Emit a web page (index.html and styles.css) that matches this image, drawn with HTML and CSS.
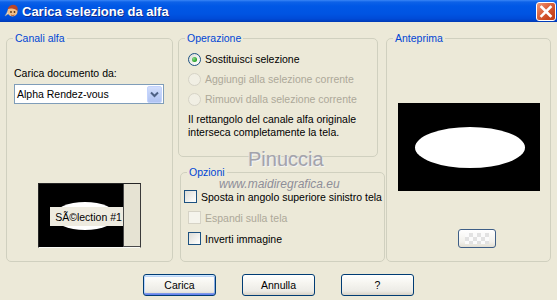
FILE: index.html
```html
<!DOCTYPE html>
<html>
<head>
<meta charset="utf-8">
<link rel="stylesheet" href="styles.css">
</head>
<body>
<div class="window">
  <div class="titlebar">
    <svg class="appicon" viewBox="0 0 16 16" width="16" height="16">
      <path d="M2 13 L6 6 L8 9 Z" fill="#e8e8e8" stroke="#9a9a9a" stroke-width="0.6"/>
      <circle cx="9.5" cy="8.5" r="5" fill="#f2c08a"/>
      <path d="M4.5 6 Q7 1 12 2 Q15.5 3.5 14.5 8 Q12 5 8 5.5 Z" fill="#b8452a"/>
      <circle cx="8" cy="9" r="0.9" fill="#5a3010"/>
      <circle cx="11.5" cy="9" r="0.9" fill="#5a3010"/>
      <path d="M8 12 Q9.8 13.2 11.5 12" stroke="#a04020" stroke-width="0.8" fill="none"/>
    </svg>
    <span class="title">Carica selezione da alfa</span>
    <div class="close">
      <svg class="close-x" viewBox="0 0 18 17" width="18" height="17"><path d="M4.5 4 L13.5 13 M13.5 4 L4.5 13" stroke="#ffffff" stroke-width="2.6" stroke-linecap="square"/></svg>
    </div>
  </div>

  <div class="content">
    <div class="groups">
      <fieldset class="group g-canali">
        <legend>Canali alfa</legend>
        <div class="field-label">Carica documento da:</div>
        <div class="select">
          <span class="select-text">Alpha Rendez-vous</span>
          <span class="select-btn"><svg viewBox="0 0 15 17" width="15" height="17"><path d="M4 6.5 L7.5 10 L11 6.5" stroke="#4d6185" stroke-width="2" fill="none"/></svg></span>
        </div>
        <div class="thumb">
          <div class="thumb-img">
            <svg viewBox="0 0 83 62" width="83" height="62"><rect width="83" height="62" fill="#000"/><ellipse cx="45" cy="31" rx="31" ry="14" fill="#fff"/></svg>
          </div>
          <div class="thumb-bar"></div>
          <div class="caption">SÃ©lection #1</div>
        </div>
      </fieldset>

      <div class="midcol">
        <fieldset class="group g-oper">
          <legend>Operazione</legend>
          <div class="opt-row"><span class="radio checked"><span class="dot"></span></span><span>Sostituisci selezione</span></div>
          <div class="opt-row disabled"><span class="radio off"></span><span>Aggiungi alla selezione corrente</span></div>
          <div class="opt-row disabled"><span class="radio off"></span><span>Rimuovi dalla selezione corrente</span></div>
          <p class="desc">Il rettangolo del canale alfa originale<br>interseca completamente la tela.</p>
        </fieldset>
        <fieldset class="group g-opz">
          <legend>Opzioni</legend>
          <div class="chk-row first"><span class="check"></span><span>Sposta in angolo superiore sinistro tela</span></div>
          <div class="chk-row disabled"><span class="check off"></span><span>Espandi sulla tela</span></div>
          <div class="chk-row"><span class="check"></span><span>Inverti immagine</span></div>
        </fieldset>
      </div>

      <fieldset class="group g-ante">
        <legend>Anteprima</legend>
        <div class="preview">
          <svg viewBox="0 0 142 88" width="142" height="88"><rect width="142" height="88" fill="#000"/><ellipse cx="72" cy="44.5" rx="55" ry="20.5" fill="#fff"/></svg>
        </div>
        <div class="mini"><span class="checker"></span></div>
      </fieldset>
    </div>

    <div class="buttons">
      <div class="btn default">Carica</div>
      <div class="btn">Annulla</div>
      <div class="btn">?</div>
    </div>
  </div>

  <div class="watermark">
    <div class="wm1">Pinuccia</div>
    <div class="wm2">www.maidiregrafica.eu</div>
  </div>
</div>
</body>
</html>
```

FILE: styles.css
```css
* { box-sizing: border-box; }
html, body { margin: 0; padding: 0; }
body {
  width: 557px;
  height: 300px;
  overflow: hidden;
  background: #ECE9D8;
  font-family: "Liberation Sans", Arial, sans-serif;
  font-size: 10.5px;
  color: #000;
}
.window { position: relative; width: 557px; height: 300px; }

/* title bar */
.titlebar {
  height: 22px;
  display: flex;
  align-items: center;
  padding-left: 3px;
  color: #fff;
  background: linear-gradient(#3a86f6 0, #0d62e8 2px, #0058e6 6px, #0054e2 14px, #004ad6 19px, #0039b4 22px);
}
.appicon { width: 16px; height: 16px; flex: none; }
.title {
  margin-left: 3px;
  font-weight: bold;
  font-size: 13px;
  text-shadow: 1px 1px 0 #0f2a8a;
}
.close {
  margin-left: auto;
  margin-right: 1px;
  width: 20px;
  height: 19px;
  border: 1px solid #ffffff;
  border-radius: 3px;
  background-color: #d9582f;
  background-image: linear-gradient(135deg, #f09a7c 0, #e06a45 35%, #cc4a22 70%, #c03d18 100%);
  flex: none;
}
.close-x { display: block; width: 18px; height: 17px; }

/* layout */
.content { padding-top: 10px; }
.groups { display: flex; height: 230px; padding-left: 6px; }
.midcol { width: 207px; margin-right: 1px; display: flex; flex-direction: column; }

.group {
  margin: 0;
  padding: 0 7px;
  border: 1px solid #D0D0BF;
  border-radius: 5px;
  min-width: 0;
}
.group legend {
  padding: 0 2px;
  margin-left: -1px;
  color: #0046D5;
  line-height: 13px;
}
.g-canali { width: 167px; height: 230px; margin-right: 5px; }
.g-oper { width: 200px; height: 125px; }
.g-opz { width: 205px; height: 96px; margin-top: 9px; margin-left: 2px; }
.g-ante { width: 165px; height: 230px; }

/* canali alfa */
.field-label { margin-top: 22px; line-height: 13px; }
.select {
  margin-top: 4px;
  width: 150px;
  height: 20px;
  border: 1px solid #7F9DB9;
  background: #fff;
  display: flex;
  align-items: center;
}
.select-text { padding-left: 2px; flex: 1; }
.select-btn {
  width: 15px;
  height: 17px;
  margin-right: 1px;
  border-radius: 2px;
  background: linear-gradient(#d2defc, #bccdf6 60%, #b0c3f2);
  border: 1px solid #c3d3fd;
  display: flex;
}
.select-btn svg { margin: -1px; }

.thumb {
  position: relative;
  margin: 79px 0 0 24px;
  width: 103px;
  height: 65px;
  display: flex;
  border: 1px solid #262626;
  border-bottom-color: #fbfbf6;
  border-right-color: #3a3a3a;
}
.thumb-img { width: 84px; height: 63px; background: #000; padding-left: 1px; padding-top: 1px; }
.thumb-img svg { display: block; }
.thumb-bar {
  flex: 1;
  background: #E6E3D3;
  border-left: 1px solid #4a4a4a;
  border-bottom: 1px solid #4a4a4a;
}
.caption {
  position: absolute;
  left: 11px;
  top: 23px;
  width: 73px;
  height: 19px;
  background: #EEEBE0;
  display: flex;
  align-items: center;
  justify-content: center;
  padding-left: 4px;
  white-space: nowrap;
}

/* operazione */
.opt-row {
  height: 20px;
  display: flex;
  align-items: center;
  gap: 4px;
  margin-left: 2px;
  white-space: nowrap;
}
.opt-row:first-of-type { margin-top: 4px; }
.disabled { color: #ACA899; }
.radio {
  width: 13px;
  height: 13px;
  border-radius: 50%;
  border: 1px solid #1C5180;
  background: linear-gradient(135deg, #dcdcd7, #fbfbf9 80%);
  display: flex;
  align-items: center;
  justify-content: center;
  flex: none;
}
.radio.off { border-color: #d6d3c6; background: #F1EFE4; }
.radio .dot {
  width: 5px;
  height: 5px;
  border-radius: 50%;
  background: radial-gradient(circle at 35% 35%, #8bd68b, #21a121 70%);
}
.desc { margin: 4px 0 0 2px; line-height: 13px; white-space: nowrap; }

/* opzioni */
.chk-row {
  height: 21px;
  display: flex;
  align-items: center;
  gap: 4px;
  white-space: nowrap;
}
.chk-row.first { margin-top: 7px; margin-left: -4px; }
.check {
  width: 13px;
  height: 13px;
  border: 1px solid #1C5180;
  background: linear-gradient(135deg, #dcdcd7, #fbfbf9 85%);
  flex: none;
}
.check.off { border-color: #d6d3c6; background: #F5F4EC; }

/* anteprima */
.preview { margin: 58px 0 0 4px; width: 142px; height: 88px; }
.preview svg { display: block; }
.mini {
  margin: 38px 0 0 64px;
  width: 38px;
  height: 19px;
  border: 1px solid #3e5e86;
  border-radius: 3px;
  background: linear-gradient(#ffffff, #f2f1ec 70%, #e2ded3);
  display: flex;
  align-items: center;
  justify-content: center;
}
.checker {
  width: 24px;
  height: 11px;
  background: repeating-conic-gradient(#e2e2e2 0 25%, #fbfbfb 0 50%) 0 0 / 8px 8px;
}

/* buttons */
.buttons {
  display: flex;
  justify-content: center;
  gap: 26px;
  margin-top: 12px;
}
.btn {
  width: 73px;
  height: 22px;
  border: 1px solid #003C74;
  border-radius: 3px;
  background: linear-gradient(#ffffff, #f6f5f0 40%, #ecebe6 80%, #d8d2c6);
  display: flex;
  align-items: center;
  justify-content: center;
}
.btn.default {
  box-shadow: inset 0 1px 0 #cee7ff, inset 0 -1px 0 #6982ee, inset 1px 0 0 #b8d4fe, inset -1px 0 0 #89ade4, inset 0 2px 0 #bcd4f6, inset 0 -2px 0 #7d99e8;
}

/* watermark */
.watermark {
  position: absolute;
  left: 219px;
  top: 147px;
  pointer-events: none;
}
.wm1 {
  padding-left: 29px;
  font-size: 20px;
  line-height: 24px;
  color: #a3a3ab;
  text-shadow: 1px 1px 0 #f4f4f4, -1px 0 0 #e0e0e0;
}
.wm2 {
  margin-top: 6px;
  font-size: 12px;
  font-style: italic;
  line-height: 14px;
  color: #8e8e98;
}
```
